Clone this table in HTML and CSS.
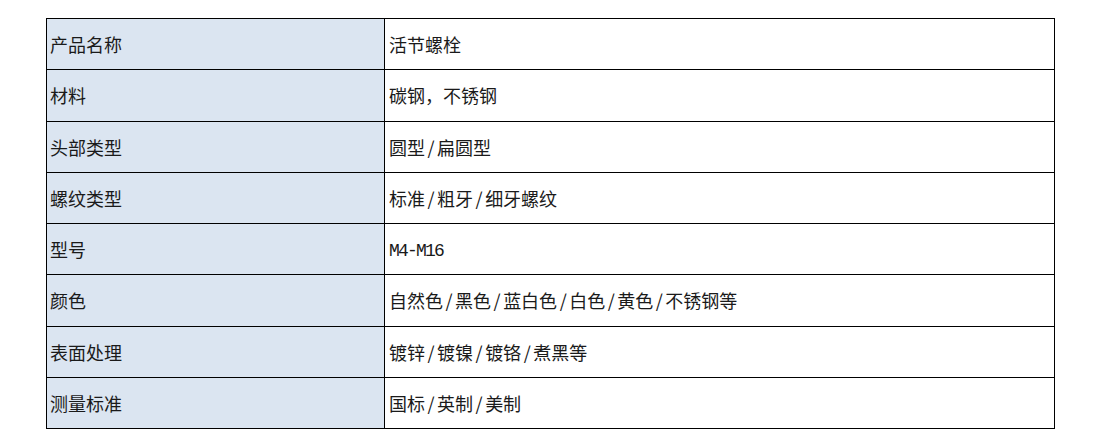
FILE: index.html
```html
<!DOCTYPE html>
<html lang="zh-CN">
<head>
<meta charset="utf-8">
<title>活节螺栓</title>
<link rel="stylesheet" href="styles.css">
</head>
<body>
<div class="page">
<table class="spec">
<colgroup><col class="c-key"><col class="c-val"></colgroup>
<tbody>
<tr><td class="key">产品名称</td><td class="val">活节螺栓</td></tr>
<tr><td class="key">材料</td><td class="val">碳钢，不锈钢</td></tr>
<tr><td class="key">头部类型</td><td class="val">圆型<span class="sep">/</span>扁圆型</td></tr>
<tr><td class="key">螺纹类型</td><td class="val">标准<span class="sep">/</span>粗牙<span class="sep">/</span>细牙螺纹</td></tr>
<tr><td class="key">型号</td><td class="val"><span class="latin">M4-M16</span></td></tr>
<tr><td class="key">颜色</td><td class="val">自然色<span class="sep">/</span>黑色<span class="sep">/</span>蓝白色<span class="sep">/</span>白色<span class="sep">/</span>黄色<span class="sep">/</span>不锈钢等</td></tr>
<tr><td class="key">表面处理</td><td class="val">镀锌<span class="sep">/</span>镀镍<span class="sep">/</span>镀铬<span class="sep">/</span>煮黑等</td></tr>
<tr><td class="key">测量标准</td><td class="val">国标<span class="sep">/</span>英制<span class="sep">/</span>美制</td></tr>
</tbody>
</table>
</div>
</body>
</html>
```
FILE: styles.css
```css
html, body {
  margin: 0;
  padding: 0;
  background: #ffffff;
}
.page {
  padding: 18px 0 0 46px;
}
.spec {
  border-collapse: collapse;
  width: 1009px;
  table-layout: fixed;
  font-family: "Noto Sans CJK SC", "Noto Sans", sans-serif;
  font-size: 18px;
  color: #1a1a1a;
}
.c-key { width: 338px; }
.spec td {
  border: 1px solid #000000;
  height: 50.25px;
  padding: 0 0 0 3px;
  vertical-align: middle;
  line-height: 20px;
}
.spec td.key {
  background: #dbe5f1;
}
.spec td.val {
  padding-left: 4px;
}
.sep {
  padding: 0 2.5px;
}
.latin {
  font-family: "Liberation Mono", monospace;
  font-size: 18px;
  letter-spacing: -1.8px;
}
```
